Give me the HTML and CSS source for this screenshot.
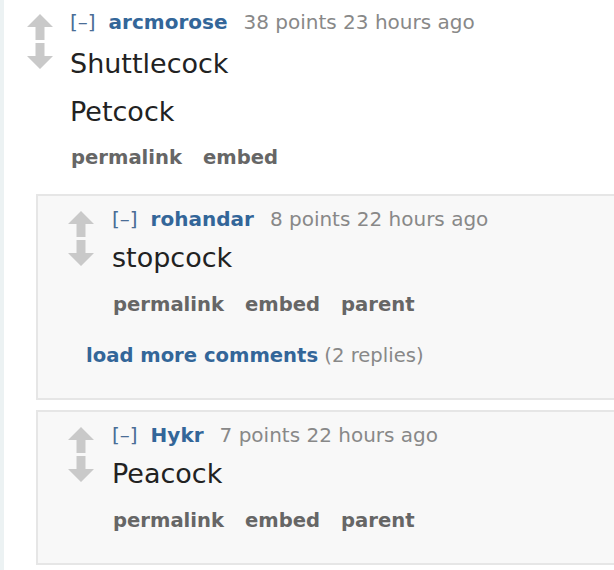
FILE: index.html
```html
<!DOCTYPE html>
<html lang="en">
<head>
    <meta charset="UTF-8">
    <meta name="viewport" content="width=device-width, initial-scale=1.0">
    <title>Comments</title>
    <link rel="stylesheet" href="styles.css">
</head>
<body>

    <div class="thread">
        <div class="comment top">
            <div class="row">
                <div class="midcol">
                    <svg class="arrow" viewBox="0 0 26 26"><path d="M13 0 L26 13 L17.5 13 L17.5 26 L8.5 26 L8.5 13 L0 13 Z"/></svg>
                    <svg class="arrow" viewBox="0 0 26 26"><path d="M8.5 0 L17.5 0 L17.5 13 L26 13 L13 26 L0 13 L8.5 13 Z"/></svg>
                </div>
                <div class="entry">
                    <p class="tagline"><a class="expand">[–]</a><a class="author">arcmorose</a><span class="score">38 points 23 hours ago</span></p>
                    <div class="md">
                        <p>Shuttlecock</p>
                        <p>Petcock</p>
                    </div>
                    <ul class="buttons">
                        <li>permalink</li>
                        <li>embed</li>
                    </ul>
                </div>
            </div>

            <div class="children">
                <div class="comment child">
                    <div class="row">
                        <div class="midcol">
                            <svg class="arrow" viewBox="0 0 26 26"><path d="M13 0 L26 13 L17.5 13 L17.5 26 L8.5 26 L8.5 13 L0 13 Z"/></svg>
                            <svg class="arrow" viewBox="0 0 26 26"><path d="M8.5 0 L17.5 0 L17.5 13 L26 13 L13 26 L0 13 L8.5 13 Z"/></svg>
                        </div>
                        <div class="entry">
                            <p class="tagline"><a class="expand">[–]</a><a class="author">rohandar</a><span class="score">8 points 22 hours ago</span></p>
                            <div class="md">
                                <p>stopcock</p>
                            </div>
                            <ul class="buttons">
                                <li>permalink</li>
                                <li>embed</li>
                                <li>parent</li>
                            </ul>
                        </div>
                    </div>
                    <div class="more"><a>load more comments</a> <span>(2 replies)</span></div>
                </div>

                <div class="comment child">
                    <div class="row">
                        <div class="midcol">
                            <svg class="arrow" viewBox="0 0 26 26"><path d="M13 0 L26 13 L17.5 13 L17.5 26 L8.5 26 L8.5 13 L0 13 Z"/></svg>
                            <svg class="arrow" viewBox="0 0 26 26"><path d="M8.5 0 L17.5 0 L17.5 13 L26 13 L13 26 L0 13 L8.5 13 Z"/></svg>
                        </div>
                        <div class="entry">
                            <p class="tagline"><a class="expand">[–]</a><a class="author">Hykr</a><span class="score">7 points 22 hours ago</span></p>
                            <div class="md">
                                <p>Peacock</p>
                            </div>
                            <ul class="buttons">
                                <li>permalink</li>
                                <li>embed</li>
                                <li>parent</li>
                            </ul>
                        </div>
                    </div>
                </div>
            </div>
        </div>
    </div>

</body>
</html>
```

FILE: styles.css
```css
body { margin: 0; background: #fff; font-family: "DejaVu Sans", Verdana, sans-serif; color: #222; overflow: hidden; }

/* hilo de comentarios */
.thread { border-left: 4px solid #ecf2f3; padding-top: 10px; min-height: 560px; }
.row { display: flex; align-items: flex-start; }
.midcol { display: flex; flex-direction: column; gap: 3px; width: 26px; margin: 4px 17px 0 23px; flex-shrink: 0; }
.arrow { width: 26px; height: 26px; display: block; fill: #c9c9c9; }
.entry { flex: 1; }

/* linea superior */
.tagline { margin: 0; font-size: 20px; line-height: 24px; color: #888; white-space: nowrap; }
.tagline .expand { color: #4a6d96; margin-right: 13px; }
.tagline .author { color: #369; font-weight: bold; margin-right: 16px; }

/* cuerpo */
.md { margin-top: 10px; font-size: 27px; line-height: 34px; color: #222; }
.md p { margin: 0 0 14px; }
.md p:last-child { margin-bottom: 0; }
.top > .row .md { margin-top: 13px; }

.buttons { list-style: none; margin: 17px 0 0 1px; padding: 0; display: flex; gap: 21px; font-size: 19.6px; line-height: 24px; font-weight: bold; color: #666; }
.child .buttons { margin-top: 18px; }

/* respuestas */
.children { margin: 24px 0 0 32px; }
.child { background: #f8f8f8; border: 2px solid #e6e6e6; border-right: none; margin-right: -10px; padding: 11px 0 30px; }
.child + .child { margin-top: 10px; }
.child .midcol { margin: 4px 18px 0 30px; }

.more { margin: 27px 0 0 48px; font-size: 19.6px; line-height: 24px; color: #888; }
.more a { color: #369; font-weight: bold; }
```
